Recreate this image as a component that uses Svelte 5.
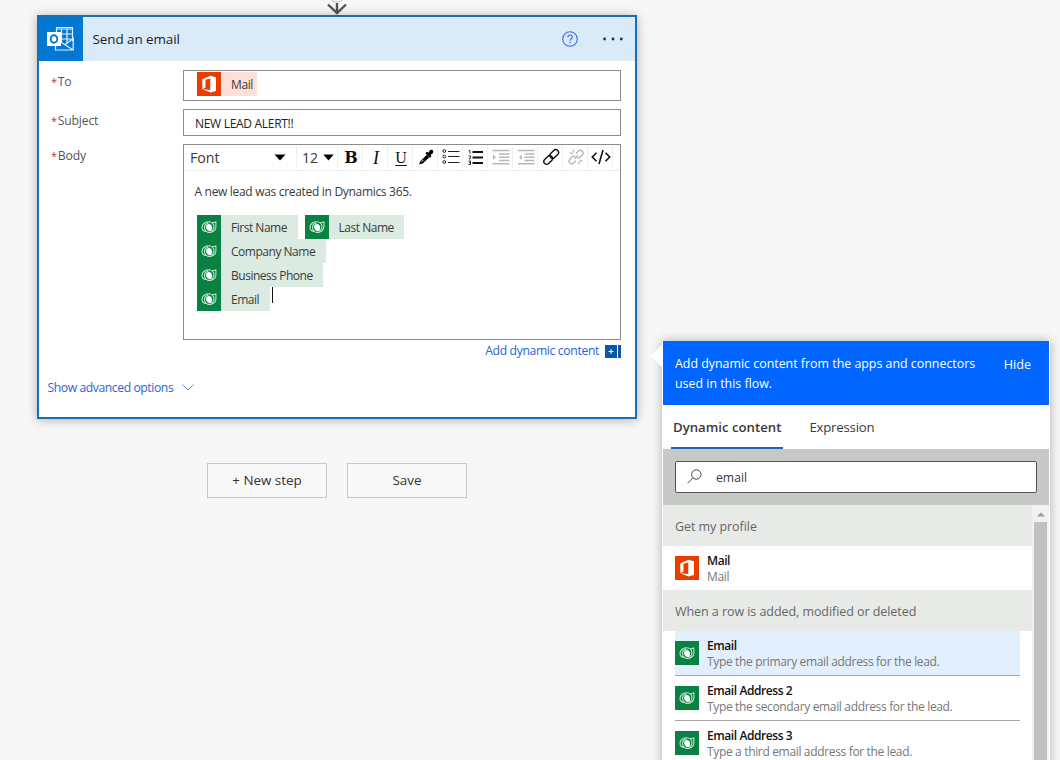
<script lang="ts">
    let subject = 'NEW LEAD ALERT!!';
    let search = 'email';

    const bodyLines = [
        ['First Name', 'Last Name'],
        ['Company Name'],
        ['Business Phone'],
        ['Email']
    ];

    const leadFields = [
        { name: 'Email', description: 'Type the primary email address for the lead.' },
        { name: 'Email Address 2', description: 'Type the secondary email address for the lead.' },
        { name: 'Email Address 3', description: 'Type a third email address for the lead.' }
    ];
</script>

{#snippet officeIcon()}
    <svg width="24" height="24" viewBox="0 0 24 24">
        <rect width="24" height="24" fill="#eb3c00" />
        <path d="M5.3 7.2 13.5 3.7l5.5 1.6v13.6l-5.5 1.6-8.2-3.2 8 .7V6.4L8.5 7.7v7.9l-3.2 1.7z" fill="#fff" />
    </svg>
{/snippet}

{#snippet dataverseIcon()}
    <svg width="24" height="24" viewBox="0 0 24 24">
        <rect width="24" height="24" fill="#088142" />
        <g fill="none" stroke="#b9e6ca" stroke-width="1.1" stroke-linecap="round" stroke-linejoin="round">
            <path d="M14 7.2C9.500 5.500 5 8.600 5 12.500c0 2.500 2 4.200 4.600 3.900-1.400-.8-2.100-2.200-2.100-3.700 0-2.200 1.300-4 3.500-4.600" />
            <path d="M10.500 17.100c4.500 1.200 8.400-1.500 8.400-5.400V6.800c-.7.7-2.300.6-4 .9 1.400.8 2.100 2.200 2.100 3.700 0 1.800-.8 3.500-2.300 4.400" />
        </g>
        <path d="M9.900 9.700c1.700-1.400 4.200-.8 4.900 1.400.6 1.800.2 3.600-.9 5-2.400.1-4.500-1.400-4.800-3.700-.1-1 .2-1.900.8-2.700z" fill="#fff" />
    </svg>
{/snippet}

<div class="designer">
    <main class="flow">
        <svg class="arrow" width="24" height="15" viewBox="0 0 24 15">
            <circle cx="12" cy="-7" r="9" fill="none" stroke="#c4c4c4" />
            <path d="M12 3v10M3 4.5l9 8.5 9-8.5" fill="none" stroke="#555" stroke-width="2.4" />
        </svg>

        <section class="card">
            <header class="card__header">
                <svg width="44" height="44" viewBox="0 0 44 44">
                    <rect width="44" height="44" fill="#0078d4" />
                    <g fill="none" stroke="#e6f2fb" stroke-width="1.2">
                        <path d="M17.5 15v-4.500h16V24M17.500 12h16M22.500 12v13M28 12v15M18 17h15.500M20 22h12" />
                        <path d="M16.500 28v5h17.700V21.500L25.500 28M21 24.500l13 8.500" />
                    </g>
                    <rect x="8" y="15" width="14" height="14" fill="#fff" />
                    <ellipse cx="15" cy="22" rx="3.3" ry="3.7" fill="none" stroke="#0078d4" stroke-width="1.9" />
                </svg>
                <h1 class="card__title">Send an email</h1>
                <svg class="help" width="16" height="16" viewBox="0 0 16 16" fill="none" stroke="#3b6be0">
                    <circle cx="8" cy="8" r="7.3" stroke-width="1.1" />
                    <path d="M5.800 6.300c0-1.500 1-2.300 2.300-2.300s2.200.8 2.200 2c0 1.700-2.200 1.800-2.200 3.700" stroke-width="1.2" />
                    <path d="M8.100 11v1.300" stroke-width="1.3" />
                </svg>
                <svg width="20" height="4" viewBox="0 0 20 4" fill="#252b33">
                    <circle cx="1.6" cy="2" r="1.4" />
                    <circle cx="10" cy="2" r="1.4" />
                    <circle cx="18.3" cy="2" r="1.4" />
                </svg>
            </header>

            <div class="field">
                <span class="field__label"><i>*</i>To</span>
                <div class="field__box field__box--to">
                    <span class="token token--office">{@render officeIcon()}<span>Mail</span></span>
                </div>
            </div>
            <div class="field">
                <span class="field__label"><i>*</i>Subject</span>
                <div class="field__box field__box--subject">{subject}</div>
            </div>
            <div class="field">
                <span class="field__label"><i>*</i>Body</span>
                <div class="field__box editor">
                    <div class="toolbar">
                        <div class="toolbar__font">
                            Font
                            <svg width="12" height="7" viewBox="0 0 12 7"><path d="M.5.5h11L6 6.500z" /></svg>
                        </div>
                        <div class="toolbar__size">
                            12
                            <svg width="11" height="7" viewBox="0 0 11 7"><path d="M.3.5h10.400L5.500 6.500z" /></svg>
                        </div>
                        <button class="toolbar__bold">B</button>
                        <button class="toolbar__italic">I</button>
                        <button class="toolbar__underline">U</button>
                        <button>
                            <svg width="18" height="18" viewBox="0 0 18 18">
                                <path d="M2 16.500l1.300-3.200 6.500-6.600 2.500 2.500-6.500 6.400-2.500.4z" />
                                <path d="M4.500 13.900l2-2" stroke="#fff" stroke-width=".9" />
                                <path d="M8.300 5.200l1.500-1.400 1.500 1 1.500-2.200c1-1.300 2.900-.8 3.400.3.400.9.100 1.900-.7 2.500l-1.800 1.400.8 1.400-1.600 1.500z" />
                            </svg>
                        </button>
                        <button>
                            <svg width="18" height="18" viewBox="0 0 18 18" fill="none" stroke="#222">
                                <circle cx="2.3" cy="3" r="1.4" /><circle cx="2.3" cy="8.5" r="1.4" /><circle cx="2.3" cy="14" r="1.4" />
                                <path d="M6 3.500h11.500M6 8.500h11.500M6 14.500h11.500" stroke-width="1.2" />
                            </svg>
                        </button>
                        <button>
                            <svg width="18" height="18" viewBox="0 0 18 18" fill="none" stroke="#111">
                                <path d="M5.500 4H16M5.500 9.500H16M5.500 15H16" stroke-width="1.8" />
                                <path d="M1.800 2.500H3v3M1.500 8h2v1.300L2 10.800h1.800M1.500 13h2v3.500h-2M2 14.700h1.500" stroke-width=".9" />
                            </svg>
                        </button>
                        <button>
                            <svg width="18" height="18" viewBox="0 0 18 18" stroke="#b9b9b9" fill="#b9b9b9">
                                <path d="M.5 2.500h17M7 6h10.500M7 9.300h10.500M7 12.500h10.500M.5 15.800h17" stroke-width="1.4" />
                                <path d="M1 6.500l3 2.800-3 2.800z" stroke="none" />
                            </svg>
                        </button>
                        <button>
                            <svg width="18" height="18" viewBox="0 0 18 18" stroke="#b9b9b9" fill="#b9b9b9">
                                <path d="M1 2.500h16.500M7.500 6h10M7.500 9.300h10M7.500 12.500h10M1 15.800h16.500" stroke-width="1.4" />
                                <path d="M5 6.500L2 9.300l3 2.800z" stroke="none" />
                            </svg>
                        </button>
                        <button>
                            <svg width="18" height="18" viewBox="0 0 18 18" fill="none" stroke="#111" stroke-width="1.4">
                                <rect x="7.2" y="3.2" width="10" height="5.6" rx="2.8" transform="rotate(-45 12.2 6)" />
                                <rect x="1.2" y="9.2" width="10" height="5.6" rx="2.8" transform="rotate(-45 6.2 12)" />
                            </svg>
                        </button>
                        <button>
                            <svg width="18" height="18" viewBox="0 0 18 18" fill="none" stroke="#b5b5b5" stroke-width="1.3">
                                <path d="M9 5.500l2.400-2.400c2.800-2.300 6.200 1 4 3.700L13 9.200c-1 .9-2 .9-3 .4M9 12.700l-2.300 2.400c-2.800 2.300-6.100-1-3.900-3.800L5.200 9c.9-.9 2-1 3-.4" />
                                <path d="M7.500 10.800l3.500-3.600M3 4.500l2.700 1.300M6 2l.8 2.600M11.500 13.500l.8 2.600M12.500 12l2.800 1.300" />
                            </svg>
                        </button>
                        <button>
                            <svg width="20" height="18" viewBox="0 0 20 18" fill="none" stroke="#111" stroke-width="1.6">
                                <path d="M5.500 4.800L1.300 9l4.200 4.200M14.500 4.800L18.700 9l-4.200 4.200M12 2L8 16" />
                            </svg>
                        </button>
                    </div>
                    <p class="editor__text">A new lead was created in Dynamics 365.</p>
                    {#each bodyLines as line, i}
                        <div class="editor__line">
                            {#each line as token}
                                <span class="token">{@render dataverseIcon()}<span>{token}</span></span>
                            {/each}
                            {#if i === bodyLines.length - 1}<span class="cursor"></span>{/if}
                        </div>
                    {/each}
                </div>
            </div>

            <div class="add-dynamic">
                <span>Add dynamic content</span>
                <svg width="16" height="13" viewBox="0 0 16 13">
                    <path d="M0 0h12v13H0zM13 0h3v13h-3z" fill="#0b58a6" />
                    <path d="M3.500 6.500h5M6 4v5" stroke="#fff" />
                </svg>
            </div>
            <div class="advanced">
                Show advanced options
                <svg width="12" height="7" viewBox="0 0 12 7"><path d="M.5.5L6 6 11.500.5" fill="none" stroke="#5e84d6" /></svg>
            </div>
        </section>

        <div class="actions">
            <button>+ New step</button>
            <button>Save</button>
        </div>
    </main>

    <aside class="panel">
        <span class="panel__beak"></span>
        <header class="panel__header">
            <p>Add dynamic content from the apps and connectors<br />used in this flow.</p>
            <span class="panel__hide">Hide</span>
        </header>
        <nav class="tabs">
            <span class="tabs__item tabs__item--active">Dynamic content</span>
            <span class="tabs__item">Expression</span>
        </nav>
        <div class="search">
            <div class="search__box">
                <svg width="15" height="15" viewBox="0 0 15 15" fill="none" stroke="#444">
                    <circle cx="9.3" cy="5.5" r="4.7" />
                    <path d="M6 8.800L.5 14.300" />
                </svg>
                {search}
            </div>
        </div>
        <div class="results">
            <div class="results__list">
                <h2 class="group">Get my profile</h2>
                <div class="item item--last">
                    {@render officeIcon()}
                    <div><b>Mail</b><small>Mail</small></div>
                </div>
                <h2 class="group">When a row is added, modified or deleted</h2>
                {#each leadFields as field, i}
                    <div class="item" class:item--selected={i === 0}>
                        {@render dataverseIcon()}
                        <div><b>{field.name}</b><small>{field.description}</small></div>
                    </div>
                {/each}
            </div>
            <div class="scrollbar">
                <svg width="8" height="5" viewBox="0 0 8 5"><path d="M0 4.500L4 .5l4 4z" fill="#999" /></svg>
                <div class="scrollbar__thumb"></div>
            </div>
        </div>
    </aside>
</div>

<style>
    :global(body) {
        background: #f7f7f7;
    }
    .designer {
        display: flex;
        align-items: flex-start;
        box-sizing: border-box;
        width: 1060px;
        height: 760px;
        padding-left: 37px;
        overflow: hidden;
        font-family: 'Open Sans', 'Noto Sans', sans-serif;
        font-size: 12.2px;
        color: #3a3a3a;
    }
    .designer :global(*) {
        box-sizing: border-box;
    }
    svg {
        display: block;
        flex: none;
    }
    button {
        font-family: inherit;
        padding: 0;
    }
    p,
    h1,
    h2 {
        margin: 0;
        font-weight: 400;
    }

    .flow {
        display: flex;
        flex-direction: column;
        width: 600px;
    }
    .arrow {
        align-self: center;
    }
    .card {
        height: 404px;
        border: 2px solid #1b6eb0;
        background: #fff;
        box-shadow: 0 1px 10px rgba(0, 0, 0, 0.28);
    }
    .card__header {
        display: flex;
        align-items: center;
        height: 44px;
        margin-bottom: 9px;
        padding-right: 12px;
        background: #d9eaf8;
    }
    .card__title {
        flex: 1;
        margin-left: 9.5px;
        font-size: 13.4px;
        letter-spacing: -0.05px;
        color: #222;
    }
    .help {
        margin: 0 25px 1px 0;
    }

    .field {
        display: flex;
        margin: 0 14px 8px 12px;
    }
    .field__label {
        width: 132px;
        padding-top: 4px;
        line-height: 16px;
        letter-spacing: -0.2px;
        color: #555;
    }
    .field__label i {
        margin-right: 1px;
        font-size: 11px;
        font-style: normal;
        color: #c8303c;
    }
    .field__box {
        width: 438px;
        border: 1px solid #8c8c8c;
    }
    .field__box--to {
        height: 31px;
        padding: 1px 13px;
    }
    .field__box--subject {
        height: 27px;
        padding-left: 11px;
        line-height: 27px;
        font-size: 12px;
        letter-spacing: -0.3px;
        color: #222;
    }
    .editor {
        height: 196px;
    }

    .token {
        display: inline-flex;
        align-items: center;
        height: 24px;
        margin-right: 7px;
        padding-right: 10.5px;
        background: #dbebe2;
        font-size: 12px;
        letter-spacing: -0.48px;
        white-space: nowrap;
    }
    .token span {
        margin-left: 10px;
    }
    .token--office {
        padding-right: 4px;
        background: #fde0d8;
        letter-spacing: -0.4px;
    }

    .toolbar {
        display: flex;
        height: 26px;
        padding: 1px 1px 1px 2px;
        border-bottom: 1px solid #eee;
    }
    .toolbar > * {
        display: flex;
        align-items: center;
        justify-content: center;
        border: 0 solid #efefef;
        border-right-width: 1px;
        background: #fff;
    }
    .toolbar button {
        width: 25px;
        padding-left: 2px;
        color: #111;
        font-family: 'Liberation Serif', serif;
        font-size: 18px;
        line-height: 20px;
    }
    .toolbar button svg {
        margin-bottom: 1px;
    }
    .toolbar .toolbar__font {
        width: 111px;
        justify-content: space-between;
        padding: 0 10px 0 4px;
        font-size: 14.2px;
    }
    .toolbar .toolbar__size {
        width: 41px;
        justify-content: space-between;
        padding: 0 3px 0 5px;
        font-size: 14.2px;
    }
    .toolbar .toolbar__bold {
        font-family: 'DejaVu Serif', serif;
        font-size: 16px;
        font-weight: 700;
    }
    .toolbar .toolbar__italic {
        font-style: italic;
    }
    .toolbar .toolbar__underline {
        font-size: 16px;
        text-decoration: underline;
        text-underline-offset: 2px;
    }
    .editor__text {
        margin: 12px 0 15px 10.5px;
        font-size: 12px;
        line-height: 17px;
        letter-spacing: -0.31px;
    }
    .editor__line {
        display: flex;
        height: 24px;
        margin-left: 13px;
    }
    .cursor {
        width: 1px;
        height: 16px;
        margin-left: -5px;
        background: #111;
    }

    .add-dynamic {
        display: flex;
        align-items: center;
        justify-content: flex-end;
        gap: 6px;
        height: 16px;
        margin: -5px 14px 0 0;
        letter-spacing: -0.36px;
        color: #2b62e0;
    }
    .add-dynamic span {
        padding-bottom: 1px;
    }
    .advanced {
        display: flex;
        align-items: center;
        gap: 9px;
        height: 18px;
        margin: 19px 0 0 8.5px;
        letter-spacing: -0.43px;
        color: #2b62e0;
    }

    .actions {
        display: flex;
        justify-content: center;
        gap: 20px;
        margin-top: 44px;
    }
    .actions button {
        width: 120px;
        height: 35px;
        padding-bottom: 2px;
        border: 1px solid #c8c8c8;
        background: #f8f8f8;
        font-size: 13.4px;
        color: #333;
    }

    .panel {
        position: relative;
        width: 388px;
        height: 460px;
        margin: 341px 0 0 25px;
        border: 1px solid #fff;
        border-top: 0;
        background: #fff;
        box-shadow: 0 0 10px rgba(0, 0, 0, 0.3);
    }
    .panel__beak {
        position: absolute;
        left: -9px;
        top: 7px;
        width: 16px;
        height: 16px;
        background: #fff;
        transform: rotate(45deg);
    }
    .panel__header {
        position: relative;
        display: flex;
        justify-content: space-between;
        height: 64px;
        padding: 13px 18px 0 12px;
        background: #0066ff;
        color: #fff;
        font-size: 12.4px;
        line-height: 20px;
    }
    .panel__hide {
        padding-top: 1px;
        font-size: 12.6px;
    }
    .tabs {
        display: flex;
        gap: 24px;
        height: 44px;
        padding-left: 8px;
        font-size: 13.2px;
    }
    .tabs__item {
        padding: 0 2px;
        line-height: 44px;
        letter-spacing: -0.2px;
    }
    .tabs__item--active {
        border-bottom: 2px solid #2560b8;
        font-weight: 600;
        letter-spacing: 0;
    }
    .search {
        height: 56px;
        padding: 12px;
        background: #c7c9c7;
    }
    .search__box {
        display: flex;
        align-items: center;
        gap: 14px;
        height: 32px;
        padding-left: 11px;
        border: 1px solid #555;
        border-radius: 2px;
        background: #fff;
    }
    .search__box svg {
        margin-bottom: 2px;
    }
    .results {
        display: flex;
    }
    .results__list {
        width: 369px;
    }
    .group {
        height: 41px;
        padding-left: 12px;
        background: #e8eae8;
        color: #666;
        font-size: 12.5px;
        line-height: 43px;
        letter-spacing: -0.06px;
    }
    .item {
        display: flex;
        align-items: center;
        gap: 8px;
        height: 45px;
        margin: 0 12px;
        border-bottom: 1px solid #a6a6a6;
    }
    .item--last {
        height: 44px;
        border: 0;
    }
    .item--selected {
        background: #e3effd;
    }
    .item div {
        padding-top: 2px;
    }
    .item b,
    .item small {
        display: block;
        font-size: 12px;
        line-height: 16px;
        letter-spacing: -0.34px;
    }
    .item b {
        font-weight: 600;
        color: #111;
        letter-spacing: -0.42px;
    }
    .item small {
        color: #777;
    }
    .scrollbar {
        display: flex;
        flex-direction: column;
        align-items: center;
        gap: 5px;
        width: 17px;
        height: 300px;
        padding-top: 7px;
        background: #f1f1f1;
    }
    .scrollbar__thumb {
        flex: 1;
        width: 13px;
        background: #c1c1c1;
    }
</style>
